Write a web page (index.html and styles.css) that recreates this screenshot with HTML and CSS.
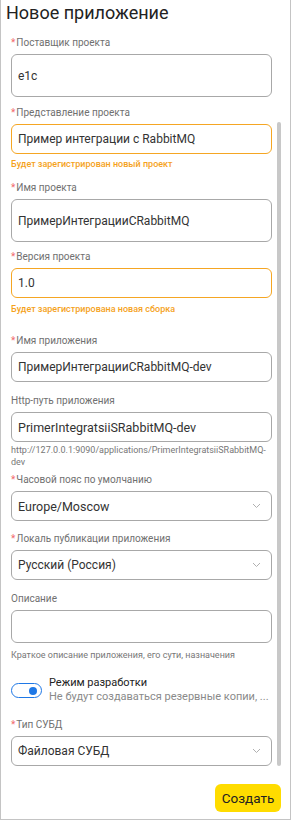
FILE: index.html
```html
<!DOCTYPE html>
<html lang="ru">
<head>
<meta charset="utf-8">
<title>Новое приложение</title>
<link rel="stylesheet" href="styles.css">
</head>
<body>
<div class="dialog">
  <h1 class="title">Новое приложение</h1>
  <div class="form">
    <div class="field f1">
      <div class="label"><span class="req">*</span>Поставщик проекта</div>
      <div class="input tall">e1c</div>
    </div>
    <div class="field f2">
      <div class="label"><span class="req">*</span>Представление проекта</div>
      <div class="input warn">Пример интеграции с RabbitMQ</div>
      <div class="hint-warn">Будет зарегистрирован новый проект</div>
    </div>
    <div class="field f3">
      <div class="label"><span class="req">*</span>Имя проекта</div>
      <div class="input tall">ПримерИнтеграцииCRabbitMQ</div>
    </div>
    <div class="field f4">
      <div class="label"><span class="req">*</span>Версия проекта</div>
      <div class="input warn">1.0</div>
      <div class="hint-warn hw2">Будет зарегистрирована новая сборка</div>
    </div>
    <div class="field f5">
      <div class="label"><span class="req">*</span>Имя приложения</div>
      <div class="input">ПримерИнтеграцииCRabbitMQ-dev</div>
    </div>
    <div class="field f6">
      <div class="label">Http-путь приложения</div>
      <div class="input latin">PrimerIntegratsiiSRabbitMQ-dev</div>
      <div class="hint url">http://127.0.0.1:9090/applications/PrimerIntegratsiiSRabbitMQ-dev</div>
    </div>
    <div class="field f7">
      <div class="label"><span class="req">*</span>Часовой пояс по умолчанию</div>
      <div class="input select latin"><span>Europe/Moscow</span>
        <svg class="chev" width="9" height="6" viewBox="0 0 9 6"><polyline points="1,1 4.5,4.5 8,1" fill="none" stroke="#b0b0b0" stroke-width="1"/></svg>
      </div>
    </div>
    <div class="field f8">
      <div class="label"><span class="req">*</span>Локаль публикации приложения</div>
      <div class="input select"><span>Русский (Россия)</span>
        <svg class="chev" width="9" height="6" viewBox="0 0 9 6"><polyline points="1,1 4.5,4.5 8,1" fill="none" stroke="#b0b0b0" stroke-width="1"/></svg>
      </div>
    </div>
    <div class="field f9">
      <div class="label">Описание</div>
      <div class="input desc"></div>
      <div class="hint desc-hint">Краткое описание приложения, его сути, назначения</div>
    </div>
    <div class="toggle-row">
      <div class="switch"><span class="knob"></span></div>
      <div class="toggle-text">
        <div class="toggle-title">Режим разработки</div>
        <div class="toggle-sub">Не будут создаваться резервные копии, ...</div>
      </div>
    </div>
    <div class="field f10">
      <div class="label"><span class="req">*</span>Тип СУБД</div>
      <div class="input select"><span>Файловая СУБД</span>
        <svg class="chev" width="9" height="6" viewBox="0 0 9 6"><polyline points="1,1 4.5,4.5 8,1" fill="none" stroke="#b0b0b0" stroke-width="1"/></svg>
      </div>
    </div>
  </div>
  <div class="footer">
    <button class="btn">Создать</button>
  </div>
  <div class="scrollbar"></div>
</div>
</body>
</html>
```
FILE: styles.css
```css
* { box-sizing: border-box; }
html, body { margin: 0; padding: 0; background: #fff; }
body { font-family: Roboto, "Liberation Sans", Arial, sans-serif; color: #333; }

.dialog {
  position: relative;
  width: 291px;
  height: 820px;
  border: 1px solid #c4c4c4;
  border-top: none;
}

.title {
  margin: 0;
  padding-left: 5px;
  font-size: 18px;
  line-height: 26px;
  font-weight: 400;
  color: #222;
}

.form {
  margin-top: 10px;
  padding-left: 10px;
  width: 271px;
}

.label {
  font-size: 10px;
  line-height: 14px;
  color: #707070;
  margin-bottom: 4px;
  white-space: nowrap;
}
.req { color: #f26b6b; margin-right: 1px; }

.input {
  display: flex;
  align-items: center;
  height: 30px;
  border: 1px solid #a8a8a8;
  border-radius: 6px;
  padding-left: 6px;
  font-size: 12px;
  color: #333;
  white-space: nowrap;
}
.input.latin { font-size: 12.5px; }
.input.tall { height: 43px; }
.input.warn { border-color: #f5a623; }
.input.desc { height: 33px; }
.select { justify-content: space-between; padding-right: 10px; }
.chev { display: block; }

.hint-warn {
  margin-top: 4px;
  font-size: 9px;
  line-height: 13px;
  font-weight: 500;
  color: #f5a21c;
}
.hint-warn.hw2 { margin-top: 5px; }

.hint {
  font-size: 9px;
  line-height: 12px;
  color: #777;
}
.url { margin-top: 2px; overflow-wrap: break-word; }
.desc-hint { margin-top: 6px; }

.f2 { margin-top: 9px; }
.f3 { margin-top: 10px; }
.f4 { margin-top: 8px; }
.f5 { margin-top: 18px; }
.f6 { margin-top: 12px; }
.f7 { margin-top: 5px; }
.f8 { margin-top: 11px; }
.f9 { margin-top: 12px; }
.f10 { margin-top: 14px; }

.toggle-row {
  display: flex;
  align-items: flex-start;
  margin-top: 15px;
}
.switch {
  width: 31px;
  height: 15px;
  margin-top: 7px;
  border: 1.5px solid #1f78e6;
  border-radius: 8px;
  background: #fff;
  display: flex;
  align-items: center;
  justify-content: flex-end;
  padding-right: 4px;
  flex: none;
}
.knob {
  width: 8px;
  height: 8px;
  border-radius: 50%;
  background: #1f78e6;
}
.toggle-text { margin-left: 7px; }
.toggle-title { font-size: 11px; line-height: 14px; color: #222; }
.toggle-sub { font-size: 11px; line-height: 14px; color: #8a8a8a; white-space: nowrap; }

.footer {
  display: flex;
  justify-content: flex-end;
  padding-right: 9px;
  margin-top: 18px;
}
.btn {
  width: 66px;
  height: 28px;
  border: none;
  border-radius: 6px;
  background: #ffdc00;
  font-family: Roboto, "Liberation Sans", Arial, sans-serif;
  font-size: 13.5px;
  color: #222;
  padding: 0;
}

.scrollbar {
  position: absolute;
  left: 276px;
  top: 122px;
  width: 4px;
  height: 644px;
  border-radius: 2px;
  background: #c8c8c8;
}
```
